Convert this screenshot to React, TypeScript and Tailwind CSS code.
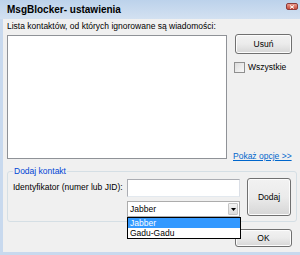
import { useState } from 'react';

const btn =
  'flex items-center justify-center rounded-[3px] border border-[#707070] bg-gradient-to-b from-[#f2f2f2] via-[#ebebeb] to-[#d6d6d6] text-[8.5px] leading-none text-black shadow-[inset_0_0_0_1px_#fcfcfc]';

export default function App() {
  const [all, setAll] = useState(false);
  const [ident, setIdent] = useState('');

  return (
    <div className="flex h-[255px] w-[300px] flex-col bg-[#f0f0f0] font-['Liberation_Sans',Arial,sans-serif] text-black">
      {/* title bar */}
      <div className="flex h-[19px] items-center justify-between bg-gradient-to-b from-[#bcd2eb] to-[#d3e1f1] pl-[7px] pr-[2px]">
        <span className="text-[10px] font-bold leading-none">MsgBlocker- ustawienia</span>
        <span className="mb-[6px] flex h-[7px] w-[12px] items-center justify-center rounded-[2px] border border-[#8c3a3a] bg-gradient-to-b from-[#e99c8f] to-[#c74a3b]">
          <svg width="6" height="4" viewBox="0 0 6 4">
            <path d="M1 0.5 L5 3.5 M5 0.5 L1 3.5" stroke="#fff" strokeWidth="1" />
          </svg>
        </span>
      </div>

      <div className="flex flex-1 flex-col border-b-[3px] border-l-[3px] border-[#c8d9ee] pl-[4px] pr-[3px] pt-[2px]">
        <p className="text-[8.5px] leading-[11px]">Lista kontaktów, od których ignorowane są wiadomości:</p>

        <div className="mt-[3px] flex gap-[8px]">
          <div className="h-[124px] w-[220px] border border-[#8f9297] bg-white" />
          <div className="flex w-[57px] flex-col">
            <button className={`${btn} mt-[-1px] h-[20px] w-[57px]`}>Usuń</button>
            <label className="ml-[-1px] mt-[8px] flex items-center gap-[3px] text-[8.5px] leading-[11px]">
              <span
                onClick={() => setAll(!all)}
                className="flex h-[11px] w-[11px] items-center justify-center border border-[#8f8f8f] bg-gradient-to-br from-[#dcdcdc] to-[#f8f8f8] text-[8px] leading-none"
              >
                {all ? '✓' : ''}
              </span>
              Wszystkie
            </label>
            <a className="mb-[-3px] mt-auto ml-[-2px] text-[8.5px] leading-[11px] text-[#0066cc] underline">
              Pokaż opcje &gt;&gt;
            </a>
          </div>
        </div>

        {/* group box */}
        <div className="relative mt-[12px] w-[290px] rounded-[3px] border border-[#d5dfe5] pb-[4px] pl-[5px] pr-[5px] pt-[6px]">
          <span className="absolute left-[5px] top-[-7px] bg-[#f0f0f0] px-[1px] text-[8.5px] leading-[12px] text-[#0046d5]">
            Dodaj kontakt
          </span>
          <div className="flex items-start">
            <div className="mt-[1px] flex h-[17px] w-[114px] items-center text-[8.5px]">Identyfikator (numer lub JID):</div>
            <div className="mt-[1px] flex w-[113px] flex-col gap-[4px]">
              <input
                value={ident}
                onChange={(e) => setIdent(e.target.value)}
                className="h-[18px] w-[113px] border border-[#abadb3] border-b-[#e3e9ef] border-r-[#dbdfe6] bg-white px-[2px] text-[8.5px] outline-none"
              />
              <div className="relative">
                <div className="flex h-[16px] w-[113px] items-center border border-[#acacac] bg-white">
                  <span className="flex-1 pl-[2px] text-[8.5px] leading-none">Jabber</span>
                  <span className="mr-[1px] flex h-[12px] w-[10px] items-center justify-center rounded-[1px] border border-[#c5c5c5] bg-gradient-to-b from-[#f4f4f4] to-[#dcdcdc]">
                    <svg width="5" height="3" viewBox="0 0 5 3">
                      <path d="M0 0 H5 L2.5 3 Z" fill="#000" />
                    </svg>
                  </span>
                </div>
                <ul className="absolute left-0 top-[16px] z-10 w-[114px] border border-black bg-white text-[8.5px] leading-[10px]">
                  <li className="bg-[#3399ff] pl-[2px] text-white">Jabber</li>
                  <li className="pl-[2px]">Gadu-Gadu</li>
                </ul>
              </div>
            </div>
            <button className={`${btn} ml-[7px] h-[38px] w-[44px]`}>Dodaj</button>
          </div>
        </div>

        <div className="mt-[7px] flex justify-end pr-[5px]">
          <button className={`${btn} h-[18px] w-[57px]`}>OK</button>
        </div>
      </div>
    </div>
  );
}
